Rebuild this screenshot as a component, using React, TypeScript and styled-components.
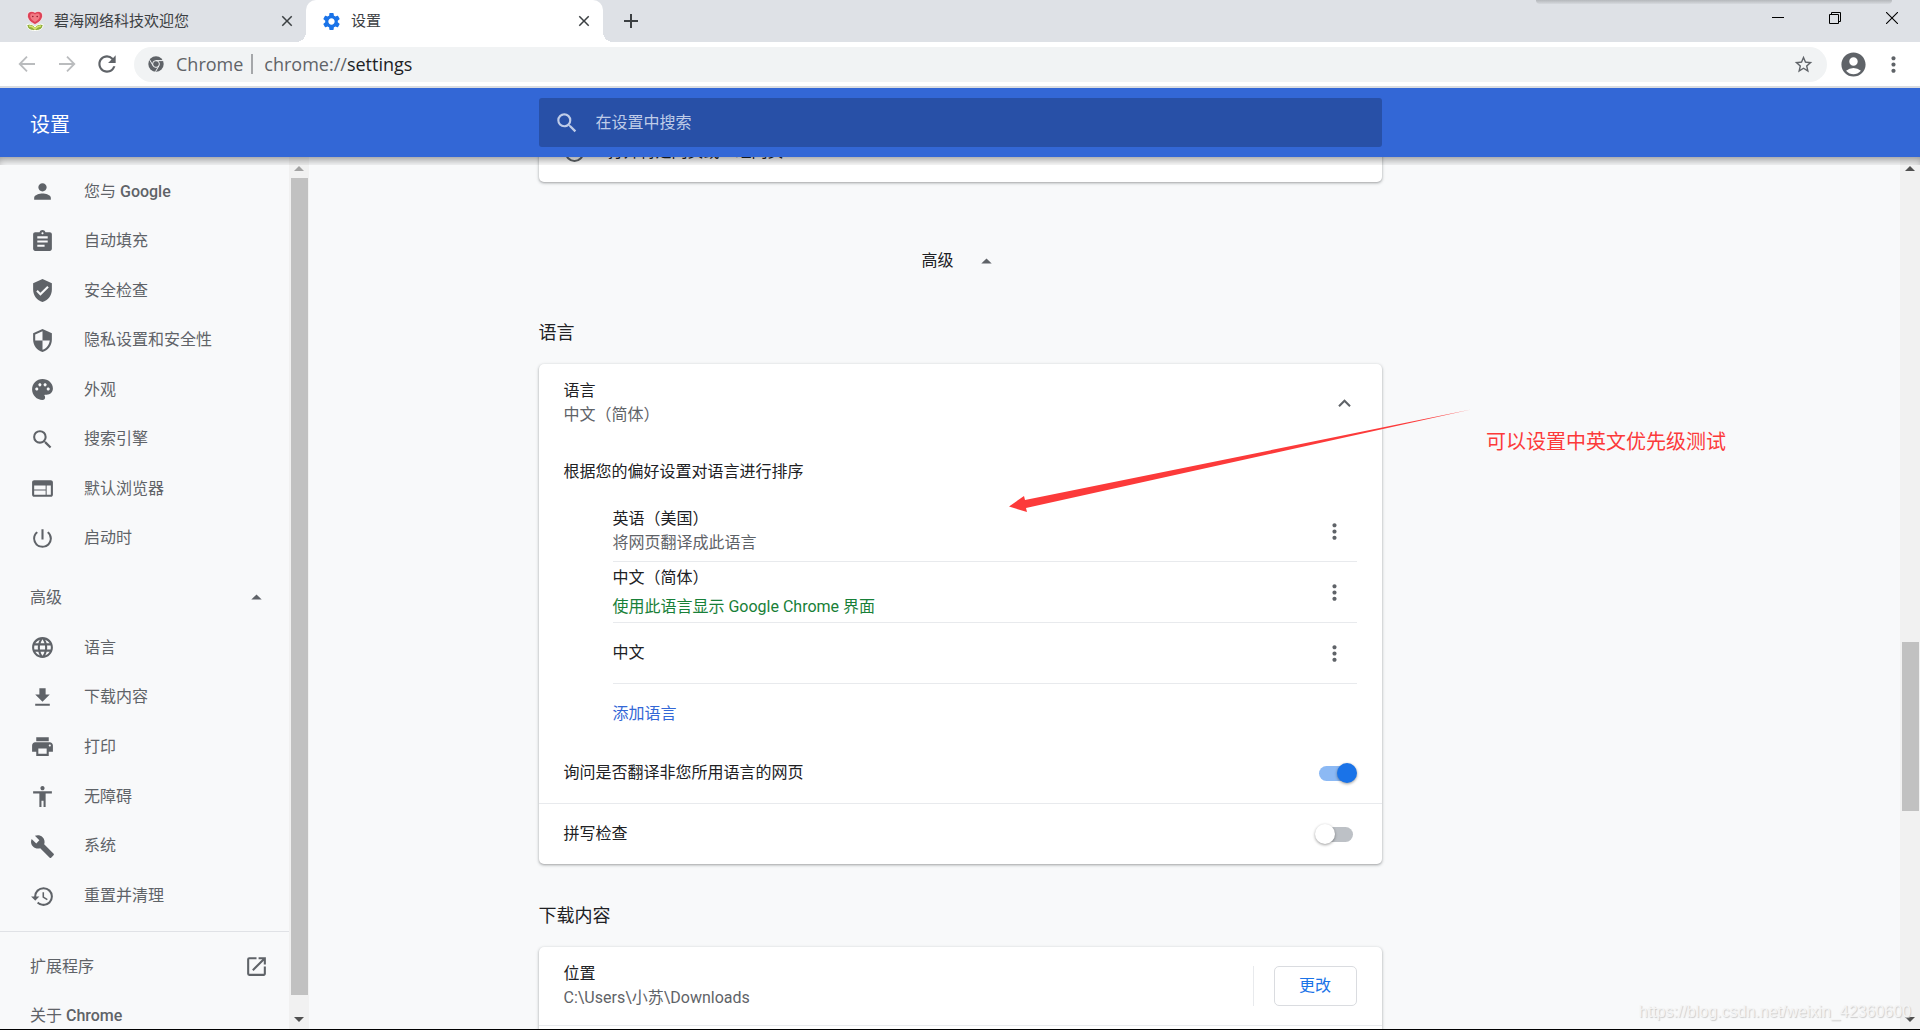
import React from 'react';
import styled, { createGlobalStyle, css } from 'styled-components';
import {
  MdPerson,
  MdAssignment,
  MdVerifiedUser,
  MdSecurity,
  MdPalette,
  MdSearch,
  MdWeb,
  MdPowerSettingsNew,
  MdLanguage,
  MdFileDownload,
  MdPrint,
  MdAccessibility,
  MdBuild,
  MdHistory,
  MdOpenInNew,
  MdArrowDropUp,
  MdMoreVert,
  MdExpandLess,
  MdStarBorder,
  MdSettings,
  MdAccountCircle,
  MdRefresh,
  MdClose,
  MdAdd,
} from 'react-icons/md';

const color = {
  strip: '#dee1e6',
  field: '#f1f3f4',
  blue: '#3367d6',
  accent: '#1a73e8',
  page: '#f8f9fa',
  text: '#202124',
  muted: '#5f6368',
  line: '#e8eaed',
  green: '#188038',
  red: '#fc3a3a',
};

const GlobalStyle = createGlobalStyle`
  *, *::before, *::after { box-sizing: border-box; }
  body {
    margin: 0;
    overflow: hidden;
    background: ${color.page};
    color: ${color.text};
    font: 400 16px/24px Roboto, "Noto Sans CJK SC", sans-serif;
  }
  button, input { font: inherit; color: inherit; }
  svg { display: block; flex: none; }
`;

const Window = styled.div`
  display: flex;
  flex-direction: column;
  height: 100vh;
  border-bottom: 1px solid #000;
`;

const IconButton = styled.button<{ $width?: number; $color?: string }>`
  display: flex;
  flex: none;
  align-items: center;
  justify-content: center;
  width: ${(p) => p.$width ?? 40}px;
  height: 36px;
  padding: 0;
  border: 0;
  background: none;
  color: ${(p) => p.$color ?? color.muted};
`;

/* ---------- tab strip ---------- */

const TabStrip = styled.div`
  position: relative;
  display: flex;
  align-items: center;
  height: 42px;
  background: ${color.strip};
`;

const TopShade = styled.div`
  position: absolute;
  top: 0;
  right: 28px;
  width: 356px;
  height: 4px;
  background: linear-gradient(#b4b7bb, #d6d9de);
  border-radius: 0 0 4px 4px;
`;

const Tab = styled.div<{ $active?: boolean }>`
  position: relative;
  display: flex;
  align-items: center;
  gap: 9px;
  width: ${(p) => (p.$active ? 297 : 306)}px;
  height: 100%;
  padding: 0 9px 0 ${(p) => (p.$active ? 15 : 25)}px;
  color: #3c4043;
  font-size: 15px;
  ${(p) =>
    p.$active &&
    css`
      background: #fff;
      border-radius: 10px 10px 0 0;
      &::before,
      &::after {
        content: '';
        position: absolute;
        bottom: 0;
        width: 10px;
        height: 10px;
      }
      &::before {
        right: 100%;
        background: radial-gradient(circle at 0 0, transparent 10px, #fff 10px);
      }
      &::after {
        left: 100%;
        background: radial-gradient(circle at 100% 0, transparent 10px, #fff 10px);
      }
    `}
`;

const TabTitle = styled.span`
  flex: 1;
  white-space: nowrap;
`;

const WindowButtons = styled.div`
  display: flex;
  align-self: flex-start;
  margin-left: auto;
`;

const NewTab = styled(IconButton)`
  margin-left: 8px;
`;

/* ---------- address bar ---------- */

const Toolbar = styled.div`
  display: flex;
  align-items: center;
  height: 46px;
  padding: 0 7px;
  border-bottom: 2px solid #dadce0;
  background: #fff;
`;

const Omnibox = styled.div`
  display: flex;
  flex: 1;
  align-items: center;
  height: 35px;
  margin: 0 6px 0 7px;
  padding: 0 4px 0 14px;
  border-radius: 18px;
  background: ${color.field};
  color: ${color.muted};
  font-family: 'Open Sans', 'Noto Sans', sans-serif;
  font-size: 18px;
`;

const OmniLabel = styled.span`
  margin: 0 8px 0 12px;
  padding-right: 8px;
  border-right: 2px solid #a5a7aa;
  line-height: 20px;
`;

const Address = styled.span`
  flex: 1;
  padding-left: 3px;
  b {
    color: ${color.text};
    font-weight: 400;
  }
`;

/* ---------- settings header ---------- */

const columns = css`
  display: grid;
  grid-template-columns: minmax(310px, 1fr) minmax(0, 843px) 1fr;
`;

const Header = styled.header`
  ${columns}
  position: relative;
  z-index: 1;
  align-items: center;
  height: 69px;
  background: ${color.blue};
  &::after {
    content: '';
    position: absolute;
    top: 100%;
    left: 0;
    right: 0;
    height: 8px;
    box-shadow: inset 0 6px 8px -3px rgba(0, 0, 0, 0.4);
  }
`;

const HeaderTitle = styled.h1`
  margin: 0;
  padding: 4px 0 0 30px;
  color: #fff;
  font-size: 20px;
  font-weight: 400;
`;

const SearchBox = styled.label`
  display: flex;
  align-items: center;
  gap: 16px;
  height: 49px;
  padding: 0 15px;
  border-radius: 3px;
  background: #2850a7;
  color: #bfcce8;
`;

const SearchInput = styled.input`
  flex: 1;
  padding: 0;
  border: 0;
  outline: 0;
  background: none;
  &::placeholder {
    color: #bfcce8;
    opacity: 1;
  }
`;

/* ---------- body ---------- */

const Body = styled.div`
  ${columns}
  position: relative;
  flex: 1;
  min-height: 0;
`;

const Side = styled.div`
  display: flex;
  width: 309px;
  min-height: 0;
`;

const Menu = styled.nav`
  flex: 1;
  padding-top: 10px;
  overflow: hidden;
  color: ${color.muted};
`;

const MenuGroup = styled.div<{ $height: number }>`
  display: grid;
  grid-auto-rows: 1fr;
  height: ${(p) => p.$height}px;
  margin-bottom: 10px;
`;

const itemRow = css`
  display: flex;
  align-items: center;
  gap: 29px;
  width: 100%;
  padding: 0 20px 0 30px;
  color: inherit;
  text-decoration: none;
`;

const MenuLink = styled.a`
  ${itemRow}
`;

const MenuToggle = styled.button`
  ${itemRow}
  justify-content: space-between;
  border: 0;
  background: none;
`;

const WideLink = styled(MenuLink)`
  justify-content: space-between;
`;

const Latin = styled.span`
  font-weight: 500;
`;

const Divider = styled.hr`
  height: 1px;
  margin: 0 0 10px;
  border: 0;
  background: #e0e2e6;
`;

const Track = styled.div`
  display: flex;
  flex: none;
  flex-direction: column;
  align-items: center;
  width: 20px;
  background: #f1f1f1;
`;

const Arrow = styled.div<{ $down?: boolean; $color: string }>`
  display: flex;
  align-items: center;
  height: ${(p) => (p.$down ? 20 : 21)}px;
  padding-top: ${(p) => (p.$down ? 0 : 2)}px;
  &::before {
    content: '';
    border: 5px solid transparent;
    border-width: ${(p) => (p.$down ? '5px 5px 0' : '0 5px 5px')};
    border-color: ${(p) => p.$color} transparent;
  }
`;

const Space = styled.div<{ $grow: number }>`
  flex: ${(p) => p.$grow} 0 0;
`;

const Thumb = styled(Space)`
  width: 17px;
  background: #c1c1c1;
`;

const RightEdge = styled.div`
  display: flex;
  justify-content: flex-end;
`;

const Main = styled.main`
  min-width: 0;
  min-height: 0;
  margin: 0 -4px;
  padding: 0 4px;
  overflow: hidden;
`;

const Card = styled.section`
  border-radius: 5px;
  background: #fff;
  box-shadow: 0 1px 2px rgba(60, 64, 67, 0.3), 0 1px 3px 1px rgba(60, 64, 67, 0.15);
`;

const ScrolledCard = styled(Card)`
  margin-top: -30px;
  padding-bottom: 5px;
`;

const Row = styled.div<{ $height?: number; $line?: boolean }>`
  display: flex;
  align-items: center;
  justify-content: space-between;
  height: ${(p) => p.$height ?? 59}px;
  padding: 0 25px;
  ${(p) => p.$line && `border-bottom: 1px solid ${color.line};`}
`;

const RadioRow = styled.label`
  display: flex;
  align-items: center;
  gap: 24px;
  height: 50px;
  padding: 0 26px;
  line-height: 20px;
`;

const Radio = styled.input`
  appearance: none;
  width: 19px;
  height: 19px;
  margin: 0;
  border: 2px solid ${color.muted};
  border-radius: 50%;
`;

const AdvancedButton = styled.button`
  display: flex;
  align-items: center;
  justify-content: center;
  gap: 20px;
  width: 100%;
  height: 40px;
  margin-top: 59px;
  padding: 0;
  border: 0;
  background: none;
  svg {
    color: ${color.muted};
  }
`;

const Heading = styled.h2`
  margin: 40px 0 19px;
  font-size: 18px;
  font-weight: 400;
`;

const Sub = styled.div<{ $tone?: string; $gap?: number }>`
  margin-top: ${(p) => p.$gap ?? 0}px;
  color: ${(p) => p.$tone ?? color.muted};
`;

const List = styled.ul`
  margin: 0 25px 0 74px;
  padding: 0;
  list-style: none;
`;

const Language = styled.li`
  display: flex;
  align-items: center;
  justify-content: space-between;
  height: 61px;
  padding-right: 2px;
  border-bottom: 1px solid ${color.line};
`;

const AddLink = styled.a`
  display: flex;
  align-items: center;
  height: 59px;
  margin-left: 74px;
  color: ${color.blue};
  text-decoration: none;
`;

const ToggleRow = styled.label<{ $line?: boolean }>`
  display: flex;
  align-items: center;
  justify-content: space-between;
  height: ${(p) => (p.$line ? 61 : 60)}px;
  padding: 0 29px 0 25px;
  border-bottom: ${(p) => (p.$line ? 1 : 0)}px solid ${color.line};
`;

const Switch = styled.input`
  position: relative;
  appearance: none;
  width: 34px;
  height: 15px;
  margin: 0;
  border-radius: 8px;
  background: #bdc1c6;
  &::before {
    content: '';
    position: absolute;
    top: -3px;
    left: -4px;
    width: 20px;
    height: 20px;
    border-radius: 50%;
    background: #fff;
    box-shadow: 0 1px 3px rgba(0, 0, 0, 0.4);
  }
  &:checked {
    background: #8cb9f4;
  }
  &:checked::before {
    left: 18px;
    background: ${color.accent};
  }
`;

const ButtonSlot = styled.div`
  padding-left: 20px;
  border-left: 1px solid ${color.line};
`;

const OutlineButton = styled.button`
  display: block;
  width: 83px;
  height: 40px;
  padding: 0;
  border: 1px solid #dadce0;
  border-radius: 5px;
  background: #fff;
  color: ${color.accent};
`;

/* ---------- notes drawn over the page ---------- */

const Pointer = styled.svg`
  position: absolute;
  top: 248px;
  left: calc(50% + 48px);
`;

const Note = styled.p`
  position: absolute;
  top: 271px;
  left: calc(50% + 526px);
  margin: 0;
  color: ${color.red};
  font-size: 20px;
  line-height: 28px;
  white-space: nowrap;
`;

const Watermark = styled.span`
  position: absolute;
  right: 9px;
  bottom: 5px;
  color: #f4f4f4;
  font-family: 'Liberation Sans', sans-serif;
  text-shadow: 1px 1px 1px #ccc;
`;

/* ---------- drawings ---------- */

const Flower = () => (
  <svg width="20" height="22" viewBox="0 0 20 22">
    <path d="M10 20.5C5 20.8 2 18.500 1.800 14.500 5.500 13.500 8.500 14.800 10 17 11.500 14.800 14.500 13.500 18.200 14.500 18 18.500 15 20.800 10 20.500Z" fill="#8fae3a" stroke="#fff" strokeWidth="1" />
    <path d="M4 16c2.500 0 4.500 1 6 3 1.500-2 3.500-3 6-3" fill="none" stroke="#d5e36f" strokeWidth="1.500" />
    <path d="M10 14.500C5 12 2.200 9 2.500 5 2.800 1.200 7.500.5 10 2.500c2.500-2 7.200-1.300 7.500 2.500.3 4-2.500 7-7.500 9.500Z" fill="#dd4257" stroke="#fff" strokeWidth=".6" />
    <path d="M10 12C6.500 10 5 8 5.200 5.500 5.500 3 8.500 3 10 4.500c1.500-1.500 4.500-1.500 4.800 1C15 8 13.500 10 10 12Z" fill="#f27a84" />
    <circle cx="7.800" cy="6.500" r=".8" fill="#8c1f30" />
    <circle cx="12.200" cy="6.500" r=".8" fill="#8c1f30" />
  </svg>
);

const Straight = ({ flip }: { flip?: boolean }) => (
  <svg width="18" height="18" viewBox="0 0 18 18" fill="none" stroke="currentColor" strokeWidth="1.800">
    <path d={flip ? 'M1 9h15M9 1.700 16.300 9 9 16.300' : 'M17 9H2M9 1.700 1.700 9 9 16.300'} />
  </svg>
);

const ChromeMark = () => (
  <svg width="16" height="16" viewBox="0 0 16 16">
    <circle cx="8" cy="8" r="7.700" fill={color.muted} />
    <g fill="none" stroke={color.field} strokeWidth="1">
      <circle cx="8" cy="8" r="3.400" />
      <path d="M8 4.600h7M5.060 9.700 1.600 3.700M10.940 9.700 7.500 15.700" />
    </g>
  </svg>
);

const Minimize = () => (
  <svg width="12" height="12" viewBox="0 0 12 12">
    <path d="M0 5h12v1H0z" fill="#000" />
  </svg>
);

const Restore = () => (
  <svg width="12" height="12" viewBox="0 0 12 12" fill="none" stroke="#000">
    <path d="M.5 2.500h9v9h-9zM2.500 2V.5h9v9H10" />
  </svg>
);

const CloseWindow = () => (
  <svg width="12" height="12" viewBox="0 0 12 12" stroke="#000" strokeWidth="1.100">
    <path d="M0 0 12 12M12 0 0 12" />
  </svg>
);

/* ---------- data ---------- */

const basicItems = [
  { icon: MdPerson, label: '您与 ', latin: 'Google' },
  { icon: MdAssignment, label: '自动填充' },
  { icon: MdVerifiedUser, label: '安全检查' },
  { icon: MdSecurity, label: '隐私设置和安全性' },
  { icon: MdPalette, label: '外观' },
  { icon: MdSearch, label: '搜索引擎' },
  { icon: MdWeb, label: '默认浏览器' },
  { icon: MdPowerSettingsNew, label: '启动时' },
];

const advancedItems = [
  { icon: MdLanguage, label: '语言' },
  { icon: MdFileDownload, label: '下载内容' },
  { icon: MdPrint, label: '打印' },
  { icon: MdAccessibility, label: '无障碍' },
  { icon: MdBuild, label: '系统' },
  { icon: MdHistory, label: '重置并清理' },
];

const languages = [
  { name: '英语（美国）', note: '将网页翻译成此语言', tone: color.muted, gap: 0 },
  { name: '中文（简体）', note: '使用此语言显示 Google Chrome 界面', tone: color.green, gap: 5 },
  { name: '中文' },
];

type Item = { icon: React.ComponentType<{ size?: number }>; label: string; latin?: string };

const MenuItem = ({ icon: Icon, label, latin }: Item) => (
  <MenuLink href="#">
    <Icon size={25} />
    <span>
      {label}
      {latin && <Latin>{latin}</Latin>}
    </span>
  </MenuLink>
);

const Scrollbar = ({ before, size, after, top }: { before: number; size: number; after: number; top: string }) => (
  <Track>
    <Arrow $color={top} />
    <Space $grow={before} />
    <Thumb $grow={size} />
    <Space $grow={after} />
    <Arrow $down $color="#505050" />
  </Track>
);

export default function App() {
  return (
    <Window>
      <GlobalStyle />
      <TabStrip>
        <TopShade />
        <Tab>
          <Flower />
          <TabTitle>碧海网络科技欢迎您</TabTitle>
          <IconButton $width={20} $color="#3c4043" aria-label="关闭标签页">
            <MdClose size={18} />
          </IconButton>
        </Tab>
        <Tab $active>
          <MdSettings size={21} color={color.accent} />
          <TabTitle>设置</TabTitle>
          <IconButton $width={20} $color="#3c4043" aria-label="关闭标签页">
            <MdClose size={18} />
          </IconButton>
        </Tab>
        <NewTab $color="#3c4043" aria-label="打开新标签页">
          <MdAdd size={24} />
        </NewTab>
        <WindowButtons>
          <IconButton $width={57} aria-label="最小化">
            <Minimize />
          </IconButton>
          <IconButton $width={57} aria-label="还原">
            <Restore />
          </IconButton>
          <IconButton $width={57} aria-label="关闭">
            <CloseWindow />
          </IconButton>
        </WindowButtons>
      </TabStrip>

      <Toolbar>
        <IconButton $color="#babcbe" aria-label="后退">
          <Straight />
        </IconButton>
        <IconButton $color="#babcbe" aria-label="前进">
          <Straight flip />
        </IconButton>
        <IconButton aria-label="重新加载">
          <MdRefresh size={26} />
        </IconButton>
        <Omnibox>
          <ChromeMark />
          <OmniLabel>Chrome</OmniLabel>
          <Address>
            chrome://<b>settings</b>
          </Address>
          <IconButton aria-label="添加书签">
            <MdStarBorder size={21} />
          </IconButton>
        </Omnibox>
        <IconButton aria-label="用户">
          <MdAccountCircle size={29} />
        </IconButton>
        <IconButton aria-label="菜单">
          <MdMoreVert size={25} />
        </IconButton>
      </Toolbar>

      <Header>
        <HeaderTitle>设置</HeaderTitle>
        <SearchBox>
          <MdSearch size={26} />
          <SearchInput type="text" placeholder="在设置中搜索" aria-label="在设置中搜索" />
        </SearchBox>
      </Header>

      <Body>
        <Side>
          <Menu>
            <MenuGroup $height={396}>
              {basicItems.map((item) => (
                <MenuItem key={item.label} {...item} />
              ))}
            </MenuGroup>
            <MenuGroup $height={348}>
              <MenuToggle>
                高级
                <MdArrowDropUp size={25} />
              </MenuToggle>
              {advancedItems.map((item) => (
                <MenuItem key={item.label} {...item} />
              ))}
            </MenuGroup>
            <Divider />
            <MenuGroup $height={99}>
              <WideLink href="#">
                扩展程序
                <MdOpenInNew size={25} />
              </WideLink>
              <WideLink href="#">
                <span>
                  关于 <Latin>Chrome</Latin>
                </span>
              </WideLink>
            </MenuGroup>
          </Menu>
          <Scrollbar before={0} size={817} after={14} top="#a3a3a3" />
        </Side>

        <Main>
          <ScrolledCard>
            <RadioRow>
              <Radio type="radio" name="startup" />
              打开特定网页或一组网页
            </RadioRow>
          </ScrolledCard>

          <AdvancedButton>
            高级
            <MdArrowDropUp size={25} />
          </AdvancedButton>

          <Heading>语言</Heading>
          <Card>
            <Row $height={78}>
              <div>
                语言
                <Sub>中文（简体）</Sub>
              </div>
              <IconButton $width={25} aria-label="收起">
                <MdExpandLess size={25} />
              </IconButton>
            </Row>
            <Row>根据您的偏好设置对语言进行排序</Row>
            <List>
              {languages.map((l) => (
                <Language key={l.name}>
                  <div>
                    {l.name}
                    {l.note && (
                      <Sub $tone={l.tone} $gap={l.gap}>
                        {l.note}
                      </Sub>
                    )}
                  </div>
                  <IconButton aria-label="更多操作">
                    <MdMoreVert size={25} />
                  </IconButton>
                </Language>
              ))}
            </List>
            <AddLink href="#">添加语言</AddLink>
            <ToggleRow $line>
              询问是否翻译非您所用语言的网页
              <Switch type="checkbox" defaultChecked />
            </ToggleRow>
            <ToggleRow>
              拼写检查
              <Switch type="checkbox" />
            </ToggleRow>
          </Card>

          <Heading>下载内容</Heading>
          <Card>
            <Row $height={79} $line>
              <div>
                位置
                <Sub>C:\Users\小苏\Downloads</Sub>
              </div>
              <ButtonSlot>
                <OutlineButton>更改</OutlineButton>
              </ButtonSlot>
            </Row>
            <Row />
          </Card>
        </Main>

        <RightEdge>
          <Scrollbar before={464} size={169} after={198} top="#505050" />
        </RightEdge>

        <Pointer width="470" height="112" viewBox="0 0 470 112">
          <path d="M1 101.500 16 91 17 95 463 4.500 18 103 19 107Z" fill={color.red} />
        </Pointer>
        <Note>可以设置中英文优先级测试</Note>
        <Watermark>https://blog.csdn.net/weixin_42360600</Watermark>
      </Body>
    </Window>
  );
}
